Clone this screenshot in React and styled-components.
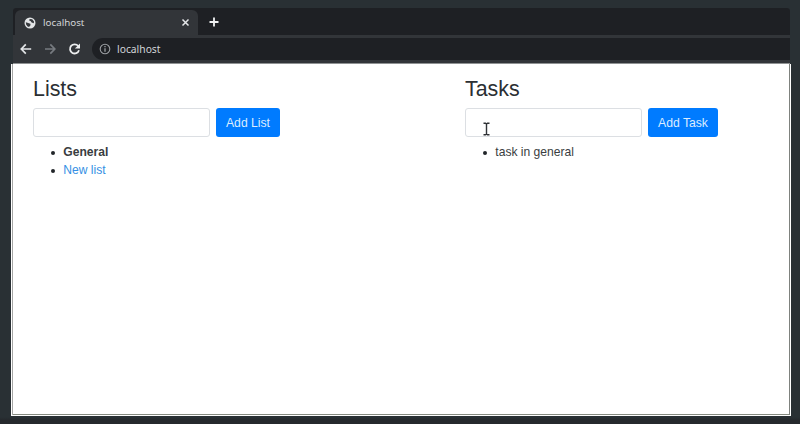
import React from "react";
import styled, { createGlobalStyle } from "styled-components";

const GlobalStyle = createGlobalStyle`
  * { box-sizing: border-box; }
  body {
    margin: 0;
    background: #292e32;
    font-family: "Liberation Sans", Arial, sans-serif;
  }
`;

const Desktop = styled.div`
  width: 800px;
  height: 424px;
  padding: 8px 9px 0 11px;
  overflow: hidden;
  background: linear-gradient(#293034 0 417px, #25292d 420px);
`;

const Chrome = styled.header`
  margin: 0 0 0 2px;
  height: 56px;
  width: 777px;
  background: #323539;
  border-bottom: 1px solid #8f9293;
  border-radius: 3px 3px 0 0;
  color: #d2d5d8;
  font-family: "Noto Sans", sans-serif;
  font-size: 10px;
`;

const TabStrip = styled.div`
  display: flex;
  height: 27px;
  padding: 2px 0 0 2px;
  background: #1e2024;
  border-radius: 3px 3px 0 0;
`;

const Tab = styled.div`
  display: flex;
  align-items: center;
  width: 183px;
  height: 25px;
  padding: 0 8px 0 9px;
  background: #323539;
  border-radius: 6px 6px 0 0;
`;

const TabTitle = styled.span`
  flex: 1;
  margin-left: 7px;
  font-size: 9.8px;
  line-height: 14px;
`;

const NewTab = styled.div`
  display: flex;
  align-items: center;
  margin-left: 11px;
  height: 25px;
  padding-bottom: 1px;
`;

const Toolbar = styled.div`
  display: flex;
  align-items: center;
  height: 28px;
  padding-left: 6px;
  background: #323539;
`;

const NavIcons = styled.div`
  display: flex;
  gap: 10px;
  align-items: center;
  width: 73px;
`;

const AddressBar = styled.div`
  display: flex;
  align-items: center;
  gap: 6px;
  flex: 1;
  height: 22px;
  padding: 0 0 1px 7px;
  background: #1e2024;
  border-radius: 11px 0 0 11px;
  line-height: 14px;
  font-size: 10.3px;
`;

const Page = styled.main`
  display: grid;
  grid-template-columns: 432px 1fr;
  height: 352px;
  padding: 12px 20px 0 20px;
  background: #fff;
  border: 1px solid #fff;
  border-top: 0;
  box-shadow: inset 1px 0 #a5a6a5, inset -1px 0 #7f827e, inset 0 -1px #858a80;
  color: #2b2f33;
`;

const Column = styled.section`
  padding-left: 1px;
`;

const Heading = styled.h2`
  margin: 0 0 6px;
  font-size: 21.4px;
  font-weight: 400;
  line-height: 26px;
`;

const Form = styled.form`
  display: flex;
  gap: 6px;
  height: 29px;
`;

const Field = styled.input`
  display: block;
  width: 177px;
  height: 29px;
  padding: 0 9px;
  border: 1px solid #dcdfe3;
  border-radius: 3px;
  background: #fff;
  font: inherit;
`;

const FieldWrap = styled.div`
  position: relative;
  height: 29px;
`;

const TextCursor = styled.svg`
  position: absolute;
  left: 17px;
  top: 14px;
`;

const Button = styled.button`
  width: ${(p) => p.$width}px;
  height: 29px;
  padding: 0;
  border: 0;
  border-radius: 3px;
  background: #007bff;
  color: #dcecff;
  font-family: inherit;
  font-size: 12.2px;
  line-height: 18px;
`;

const Items = styled.ul`
  margin: 6px 0 0;
  padding: 0 0 0 18px;
  list-style: none;
  font-size: 12.1px;
  line-height: 18.2px;
`;

const Item = styled.li`
  display: flex;
  align-items: center;
  font-weight: ${(p) => (p.$active ? 700 : 400)};
  color: ${(p) => (p.$link ? "#3590e4" : "#393d41")};

  &::before {
    content: "";
    width: 4px;
    height: 4px;
    margin: 1px 8.3px 0 0;
    border-radius: 50%;
    background: #212529;
  }
`;

const Globe = () => (
  <svg width="12" height="12" viewBox="0 0 12 12">
    <circle cx="6" cy="6" r="5.5" fill="#e3e5e7" />
    <path d="M1.8 5.2 4.2 6l2.2.8.1 1.4L5 10.1 3.3 9.2 2.2 7.6Z" fill="#36393d" />
    <path d="M5.6 2 8.2 2.2 10 4.4 9.8 6.2 7.6 5.6 6.8 4.2 5.2 3.6Z" fill="#36393d" />
  </svg>
);

const Arrow = ({ color, flip }) => (
  <svg width="14" height="14" viewBox="0 0 14 14" fill="none" stroke={color} strokeWidth="1.7">
    <path d={flip ? "M2 7h9.5M7.3 2.4 11.8 7l-4.5 4.6" : "M12.2 7H2.5M6.8 2.4 2.3 7l4.5 4.6"} />
  </svg>
);

const Reload = () => (
  <svg width="14" height="14" viewBox="0 0 14 14">
    <path d="M12 8.3A4.6 4.6 0 1 1 11.2 4" fill="none" stroke="#eceeef" strokeWidth="1.8" />
    <path d="M13 1.4v5.2H7.9Z" fill="#eceeef" />
  </svg>
);

const Info = () => (
  <svg width="12" height="12" viewBox="0 0 12 12" fill="none" stroke="#9b9ea2">
    <circle cx="6" cy="6" r="4.8" strokeWidth="1.1" />
    <path d="M6 5.2v3.6M6 3.1v1.2" strokeWidth="1.3" />
  </svg>
);

export default function App() {
  return (
    <>
      <GlobalStyle />
      <Desktop>
        <Chrome>
          <TabStrip>
            <Tab>
              <Globe />
              <TabTitle>localhost</TabTitle>
              <svg width="9" height="9" viewBox="0 0 9 9" stroke="#e5e7e9" strokeWidth="1.5">
                <path d="m1.5 1.5 6 6m0-6-6 6" />
              </svg>
            </Tab>
            <NewTab>
              <svg width="10" height="10" viewBox="0 0 10 10" stroke="#f0f1f2" strokeWidth="1.8">
                <path d="M5 .5v9M.5 5h9" />
              </svg>
            </NewTab>
          </TabStrip>
          <Toolbar>
            <NavIcons>
              <Arrow color="#e3e5e7" />
              <Arrow color="#777b80" flip />
              <Reload />
            </NavIcons>
            <AddressBar>
              <Info />
              <span>localhost</span>
            </AddressBar>
          </Toolbar>
        </Chrome>
        <Page>
          <Column>
            <Heading>Lists</Heading>
            <Form>
              <Field aria-label="List name" />
              <Button type="button" $width={64}>Add List</Button>
            </Form>
            <Items>
              <Item $active>General</Item>
              <Item $link>New list</Item>
            </Items>
          </Column>
          <Column>
            <Heading>Tasks</Heading>
            <Form>
              <FieldWrap>
                <Field aria-label="Task name" />
                <TextCursor width="9" height="14" viewBox="0 0 9 14" fill="none" stroke="#303337" strokeWidth="1.4">
                  <path d="M1.5 1.2h2l1 .8 1-.8h2M4.5 2v10M1.5 12.8h2l1-.8 1 .8h2" />
                </TextCursor>
              </FieldWrap>
              <Button type="button" $width={70}>Add Task</Button>
            </Form>
            <Items>
              <Item>task in general</Item>
            </Items>
          </Column>
        </Page>
      </Desktop>
    </>
  );
}
